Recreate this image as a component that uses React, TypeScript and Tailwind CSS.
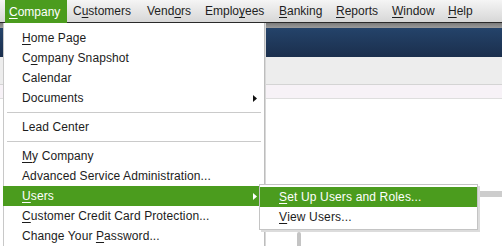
import React from "react";

type BarItem = { label: string; key: number; box: string };

const barItems: BarItem[] = [
  { label: "Company", key: 0, box: "w-[62px] pl-[4px]" },
  { label: "Customers", key: 1, box: "w-[74px] pl-[6px]" },
  { label: "Vendors", key: 4, box: "w-[58px] pl-[6px]" },
  { label: "Employees", key: 5, box: "w-[74px] pl-[6px]" },
  { label: "Banking", key: 0, box: "w-[57px] pl-[6px]" },
  { label: "Reports", key: 0, box: "w-[56px] pl-[6px]" },
  { label: "Window", key: 0, box: "w-[56px] pl-[6px]" },
  { label: "Help", key: 0, box: "w-[40px] pl-[6px]" },
];

type MenuEntry =
  | { sep: true }
  | { sep?: false; label: string; key?: number; sub?: boolean; active?: boolean };

const companyMenu: MenuEntry[] = [
  { label: "Home Page", key: 0 },
  { label: "Company Snapshot", key: 1 },
  { label: "Calendar" },
  { label: "Documents", sub: true },
  { sep: true },
  { label: "Lead Center" },
  { sep: true },
  { label: "My Company", key: 0 },
  { label: "Advanced Service Administration..." },
  { label: "Users", key: 0, sub: true, active: true },
  { label: "Customer Credit Card Protection...", key: 0 },
  { label: "Change Your Password...", key: 12 },
];

function Mnemonic({ text, at }: { text: string; at?: number }) {
  if (at == null) return <>{text}</>;
  return (
    <>
      {text.slice(0, at)}
      <u className="underline-offset-[2px]">{text[at]}</u>
      {text.slice(at + 1)}
    </>
  );
}

function Arrow({ white }: { white?: boolean }) {
  return (
    <svg width="4" height="7" viewBox="0 0 4 7" className="shrink-0">
      <path d="M0 0L4 3.5L0 7Z" fill={white ? "#ffffff" : "#111111"} />
    </svg>
  );
}

function CompanyMenu() {
  return (
    <div className="absolute left-[3px] top-[23px] w-[261px] bg-white pt-[5px] tracking-[0.1px] shadow-[inset_1px_0_0_#c8c8c8,1px_0_0_#bdbdbd,2px_0_0_#d8d8d8]">
      {companyMenu.map((e, i) =>
        e.sep ? (
          <div key={i} className="h-[9px] pl-[4px] pr-[3px] pt-[4px]">
            <div className="border-t border-[#cacaca]" />
          </div>
        ) : (
          <div
            key={i}
            className={
              e.active
                ? "flex h-[20px] items-center justify-between bg-[#4b9c1e] pl-[19px] pr-[7px] text-white"
                : "flex h-[20px] items-center justify-between pl-[19px] pr-[7px] text-[#1c1c1c]"
            }
          >
            <span>
              <Mnemonic text={e.label} at={e.key} />
            </span>
            {e.sub && <Arrow white={e.active} />}
          </div>
        )
      )}
    </div>
  );
}

function UsersSubmenu() {
  return (
    <div className="absolute left-[259px] top-[184px] w-[219px] border border-[#c4c4c4] bg-white py-[2px] tracking-[0.15px] shadow-[2px_2px_0_#dcdcdc]">
      <div className="flex h-[20px] items-center bg-[#4b9c1e] pl-[19px] text-white">
        <Mnemonic text="Set Up Users and Roles..." at={0} />
      </div>
      <div className="flex h-[20px] items-center pl-[19px] text-[#1c1c1c]">
        <Mnemonic text="View Users..." at={0} />
      </div>
    </div>
  );
}

export default function App() {
  return (
    <div className="relative flex h-[246px] w-[502px] flex-col overflow-hidden bg-white font-['Liberation_Sans',Arial,sans-serif] text-[12px] leading-none">
      <nav className="flex h-[23px] shrink-0 border-b border-[#2a2a2a] bg-gradient-to-b from-[#f5f5f5] to-[#d7d7d7] pl-[5px]">
        {barItems.map((b, i) => (
          <div
            key={b.label}
            className={
              i === 0
                ? `flex h-[23px] items-center bg-[#4b9c1e] text-white ${b.box}`
                : `flex h-[22px] items-center text-[#1e1e1e] ${b.box}`
            }
          >
            <Mnemonic text={b.label} at={b.key} />
          </div>
        ))}
      </nav>

      <div className="h-[5px] shrink-0 bg-gradient-to-b from-[#7a7a7a] to-[#9c9c9c]" />
      <div className="h-[29px] shrink-0 bg-gradient-to-b from-[#24436a] to-[#1b2f4d]" />
      <div className="h-[28px] shrink-0 border-b border-[#d4d4d4] bg-[#ededed]" />
      <div className="h-[14px] shrink-0 border-b border-[#dedede] bg-[#f7f2f7]" />

      <div className="relative flex-1 bg-white">
        <div className="absolute left-[478px] top-[92px] h-[6px] w-[24px] bg-[#cdcdcd]" />
        <div className="absolute left-[297px] top-[133px] h-[20px] w-[4px] rounded-t-[2px] bg-[#c4c4c4]" />
      </div>

      <CompanyMenu />
      <UsersSubmenu />
    </div>
  );
}
